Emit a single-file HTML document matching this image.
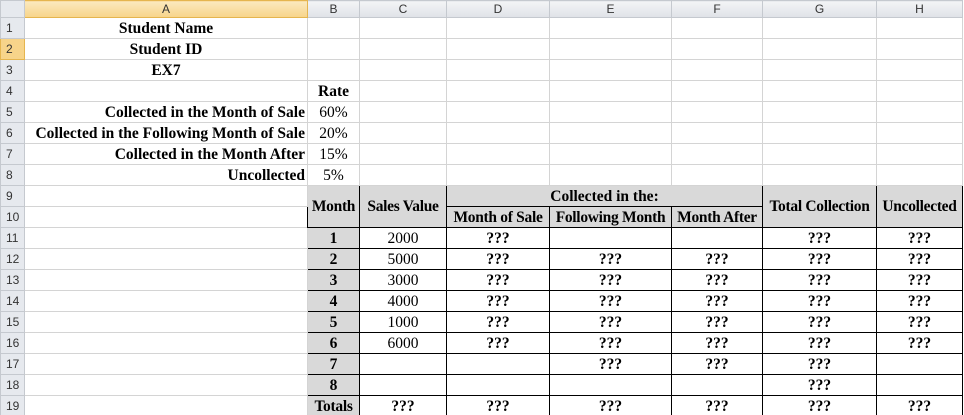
<!DOCTYPE html>
<html><head><style>
html,body{margin:0;padding:0;background:#fff;width:964px;height:415px;overflow:hidden}
table{border-collapse:collapse;table-layout:fixed;font-family:"Liberation Serif",serif;font-size:15.5px}
td{border:1px solid #d4d4d4;height:20px;padding:0 2px;white-space:nowrap;overflow:hidden;text-align:center;vertical-align:bottom;line-height:18px}
td.rh{background:#e6e9ee;color:#333;font-family:"Liberation Sans",sans-serif;font-size:12px;text-align:left;padding-left:5px;border-color:#c5c9cf;vertical-align:middle}
tr.ch td{background:linear-gradient(#f3f4f6,#dfe2e7);color:#333;font-family:"Liberation Sans",sans-serif;font-size:12px;height:16px;line-height:14px;border-color:#c5c9cf;vertical-align:middle}
tr.ch td.sel{background:linear-gradient(#fbe9bf,#f7d48a);border-color:#e5b54f}
td.rh.sel{background:#f7d48a;border-color:#e5b54f}
.b{font-weight:bold}
.r{text-align:right}
.k{border:1px solid #000}
.g{background:#d9d9d9}
.s{letter-spacing:-0.3px}
</style></head><body>
<table>
<colgroup><col style="width:24px"><col style="width:283px"><col style="width:52px"><col style="width:87px"><col style="width:103px"><col style="width:122px"><col style="width:91px"><col style="width:114px"><col style="width:86px"></colgroup>
<tr class="ch"><td style="background:#e6e9ee"></td><td class="sel">A</td><td>B</td><td>C</td><td>D</td><td>E</td><td>F</td><td>G</td><td>H</td></tr>
<tr><td class="rh">1</td><td class="b">Student Name</td><td></td><td></td><td></td><td></td><td></td><td></td><td></td></tr>
<tr><td class="rh sel">2</td><td class="b">Student ID</td><td></td><td></td><td></td><td></td><td></td><td></td><td></td></tr>
<tr><td class="rh">3</td><td class="b">EX7</td><td></td><td></td><td></td><td></td><td></td><td></td><td></td></tr>
<tr><td class="rh">4</td><td></td><td class="b">Rate</td><td></td><td></td><td></td><td></td><td></td><td></td></tr>
<tr><td class="rh">5</td><td class="b r">Collected in the Month of Sale</td><td>60%</td><td></td><td></td><td></td><td></td><td></td><td></td></tr>
<tr><td class="rh">6</td><td class="b r">Collected in the Following Month of Sale</td><td>20%</td><td></td><td></td><td></td><td></td><td></td><td></td></tr>
<tr><td class="rh">7</td><td class="b r">Collected in the Month After</td><td>15%</td><td></td><td></td><td></td><td></td><td></td><td></td></tr>
<tr><td class="rh">8</td><td class="b r">Uncollected</td><td>5%</td><td></td><td></td><td></td><td></td><td></td><td></td></tr>
<tr><td class="rh">9</td><td></td><td class="b k g s" rowspan="2" style="vertical-align:middle">Month</td><td class="b k g s" rowspan="2" style="vertical-align:middle">Sales Value</td><td class="b k g" colspan="3">Collected in the:</td><td class="b k g s" rowspan="2" style="vertical-align:middle">Total Collection</td><td class="b k g s" rowspan="2" style="vertical-align:middle">Uncollected</td></tr>
<tr><td class="rh">10</td><td></td><td class="b k g s">Month of Sale</td><td class="b k g s">Following Month</td><td class="b k g s">Month After</td></tr>
<tr><td class="rh">11</td><td></td><td class="b k g">1</td><td class="k">2000</td><td class="k b">???</td><td class="k"></td><td class="k"></td><td class="k b">???</td><td class="k b">???</td></tr>
<tr><td class="rh">12</td><td></td><td class="b k g">2</td><td class="k">5000</td><td class="k b">???</td><td class="k b">???</td><td class="k b">???</td><td class="k b">???</td><td class="k b">???</td></tr>
<tr><td class="rh">13</td><td></td><td class="b k g">3</td><td class="k">3000</td><td class="k b">???</td><td class="k b">???</td><td class="k b">???</td><td class="k b">???</td><td class="k b">???</td></tr>
<tr><td class="rh">14</td><td></td><td class="b k g">4</td><td class="k">4000</td><td class="k b">???</td><td class="k b">???</td><td class="k b">???</td><td class="k b">???</td><td class="k b">???</td></tr>
<tr><td class="rh">15</td><td></td><td class="b k g">5</td><td class="k">1000</td><td class="k b">???</td><td class="k b">???</td><td class="k b">???</td><td class="k b">???</td><td class="k b">???</td></tr>
<tr><td class="rh">16</td><td></td><td class="b k g">6</td><td class="k">6000</td><td class="k b">???</td><td class="k b">???</td><td class="k b">???</td><td class="k b">???</td><td class="k b">???</td></tr>
<tr><td class="rh">17</td><td></td><td class="b k g">7</td><td class="k"></td><td class="k"></td><td class="k b">???</td><td class="k b">???</td><td class="k b">???</td><td class="k"></td></tr>
<tr><td class="rh">18</td><td></td><td class="b k g">8</td><td class="k"></td><td class="k"></td><td class="k"></td><td class="k"></td><td class="k b">???</td><td class="k"></td></tr>
<tr><td class="rh">19</td><td></td><td class="b k g s">Totals</td><td class="k b">???</td><td class="k b">???</td><td class="k b">???</td><td class="k b">???</td><td class="k b">???</td><td class="k b">???</td></tr>
</table>
</body></html>
